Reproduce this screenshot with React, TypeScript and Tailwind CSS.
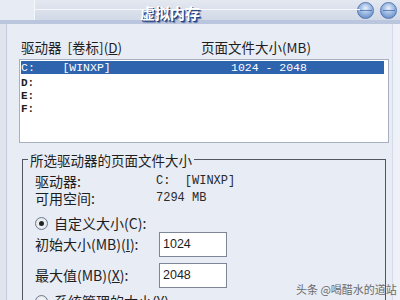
import React from "react";

const cjk = { fontFamily: '"Noto Sans CJK SC", "Noto Sans", sans-serif' };
const mono = { fontFamily: '"Liberation Mono", "DejaVu Sans Mono", monospace' };
const sans = { fontFamily: '"Liberation Sans", Arial, sans-serif' };

function Orb() {
  return (
    <div className="w-[17px] h-[17px] rounded-full border border-[#5678b0] bg-[radial-gradient(circle_at_50%_35%,#eaf1fb_0%,#a3bee4_40%,#4f7cc0_100%)] flex items-center justify-center">
      <div className="w-[12px] h-[1px] bg-[#3a63a5] opacity-70" />
    </div>
  );
}

function Radio({ checked }: { checked?: boolean }) {
  return (
    <span className="w-[13px] h-[13px] rounded-full border border-[#6e7a8c] bg-[radial-gradient(circle,#ffffff,#d6dbe4)] flex items-center justify-center shrink-0">
      {checked && <span className="w-[5px] h-[5px] rounded-full bg-[#222]" />}
    </span>
  );
}

export default function App() {
  return (
    <div className="w-[400px] h-[300px] overflow-hidden relative bg-[#e8ecf5] text-[#1e1e1e]" style={cjk}>
      {/* title bar */}
      <div className="h-[24px] flex bg-[linear-gradient(#e3e8f1,#d2d9e7)] border-b-[4px] border-[#bac6dd]">
        <div className="w-[35px] border-r border-[#f3f6fb] bg-[#e7ebf3]" />
        <div className="flex-1 relative flex">
          <div className="absolute left-0 right-[40px] top-[9px] h-[1px] bg-[#f5f7fb]" />
          <div className="flex-1 flex justify-center items-start pt-[5px] pr-[52px]">
            <span
              className="text-[15px] font-bold text-white leading-[15px]"
              style={{ textShadow: "1px 1px 0 #1f3b78, 2px 2px 1px #5a6fa0" }}
            >
              虚拟内存
            </span>
          </div>
          <div className="flex items-start pt-[2px] gap-[6px] pr-[3px]">
            <Orb />
            <Orb />
          </div>
        </div>
      </div>

      {/* body */}
      <div className="flex h-[276px]">
        <div className="w-[7px] shrink-0 bg-[#dfe4ee] border-r border-[#c3cbdb]" />
        <div className="flex-1 flex flex-col pl-[12px]">
          <div className="flex text-[13.5px] leading-[14px] mt-[16px] ml-[2px] shrink-0 whitespace-pre">
            <span className="w-[180px]">
              驱动器  [卷标]<span>(<span className="underline">D</span>)</span>
            </span>
            <span>页面文件大小(MB)</span>
          </div>
          <div className="mt-[5px] h-[84px] w-[370px] shrink-0 bg-white border border-[#a8b0bf] pt-[1px] pl-[1px] pr-[4px]">
            <div className="h-[13px] bg-[#2e63ae] text-white text-[11.5px] leading-[13px] flex whitespace-pre" style={mono}>
              <span className="w-[210px]">C:    [WINXP]</span>
              <span>1024 - 2048</span>
            </div>
            <div className="text-[11px] leading-[13px] font-bold mt-[3px] whitespace-pre" style={mono}>
              <div>D:</div>
              <div>E:</div>
              <div>F:</div>
            </div>
          </div>

          {/* group box */}
          <div className="relative mt-[16px] ml-[3px] w-[364px] h-[200px] shrink-0 border border-[#50555f] border-b-0">
            <span className="absolute left-[5px] top-[-8px] px-[2px] bg-[#e8ecf5] text-[13.5px] leading-[16px]">
              所选驱动器的页面文件大小
            </span>
            <div className="pl-[12px] pt-[13px] text-[14px]">
              <div className="flex items-center h-[17px] leading-[17px]">
                <span className="w-[121px]">驱动器:</span>
                <span className="whitespace-pre text-[12px] text-[#2a2a2a]" style={mono}>C:  [WINXP]</span>
              </div>
              <div className="flex items-center h-[17px] leading-[17px]">
                <span className="w-[121px]">可用空间:</span>
                <span className="whitespace-pre text-[12px] text-[#2a2a2a]" style={mono}>7294 MB</span>
              </div>
              <div className="flex items-center mt-[8px] h-[16px]">
                <Radio checked />
                <span className="ml-[6px]">自定义大小(C):</span>
              </div>
              <div className="flex items-center mt-[1px] h-[25px]">
                <span className="w-[124px]">初始大小(MB)(<span className="underline">I</span>):</span>
                <div className="w-[68px] h-[25px] bg-white border border-[#7d8696] text-[12.5px] pl-[3px] pt-[4px] leading-[14px]" style={sans}>1024</div>
              </div>
              <div className="flex items-center mt-[6px] h-[25px]">
                <span className="w-[124px]">最大值(MB)(<span className="underline">X</span>):</span>
                <div className="w-[68px] h-[25px] bg-white border border-[#7d8696] text-[12.5px] pl-[3px] pt-[4px] leading-[14px]" style={sans}>2048</div>
              </div>
              <div className="flex items-center mt-[5px] h-[16px]">
                <Radio />
                <span className="ml-[6px]">系统管理的大小(Y)</span>
              </div>
            </div>
          </div>
        </div>
        <div className="w-[8px] shrink-0 bg-[#eef1f7] border-l border-[#d5dbe7]" />
      </div>

      {/* watermark */}
      <div className="absolute left-[296px] top-[283px] text-[11px] text-[#6b6b6b] leading-[12px] whitespace-nowrap">
        头条 @喝醋水的道站
      </div>
    </div>
  );
}
